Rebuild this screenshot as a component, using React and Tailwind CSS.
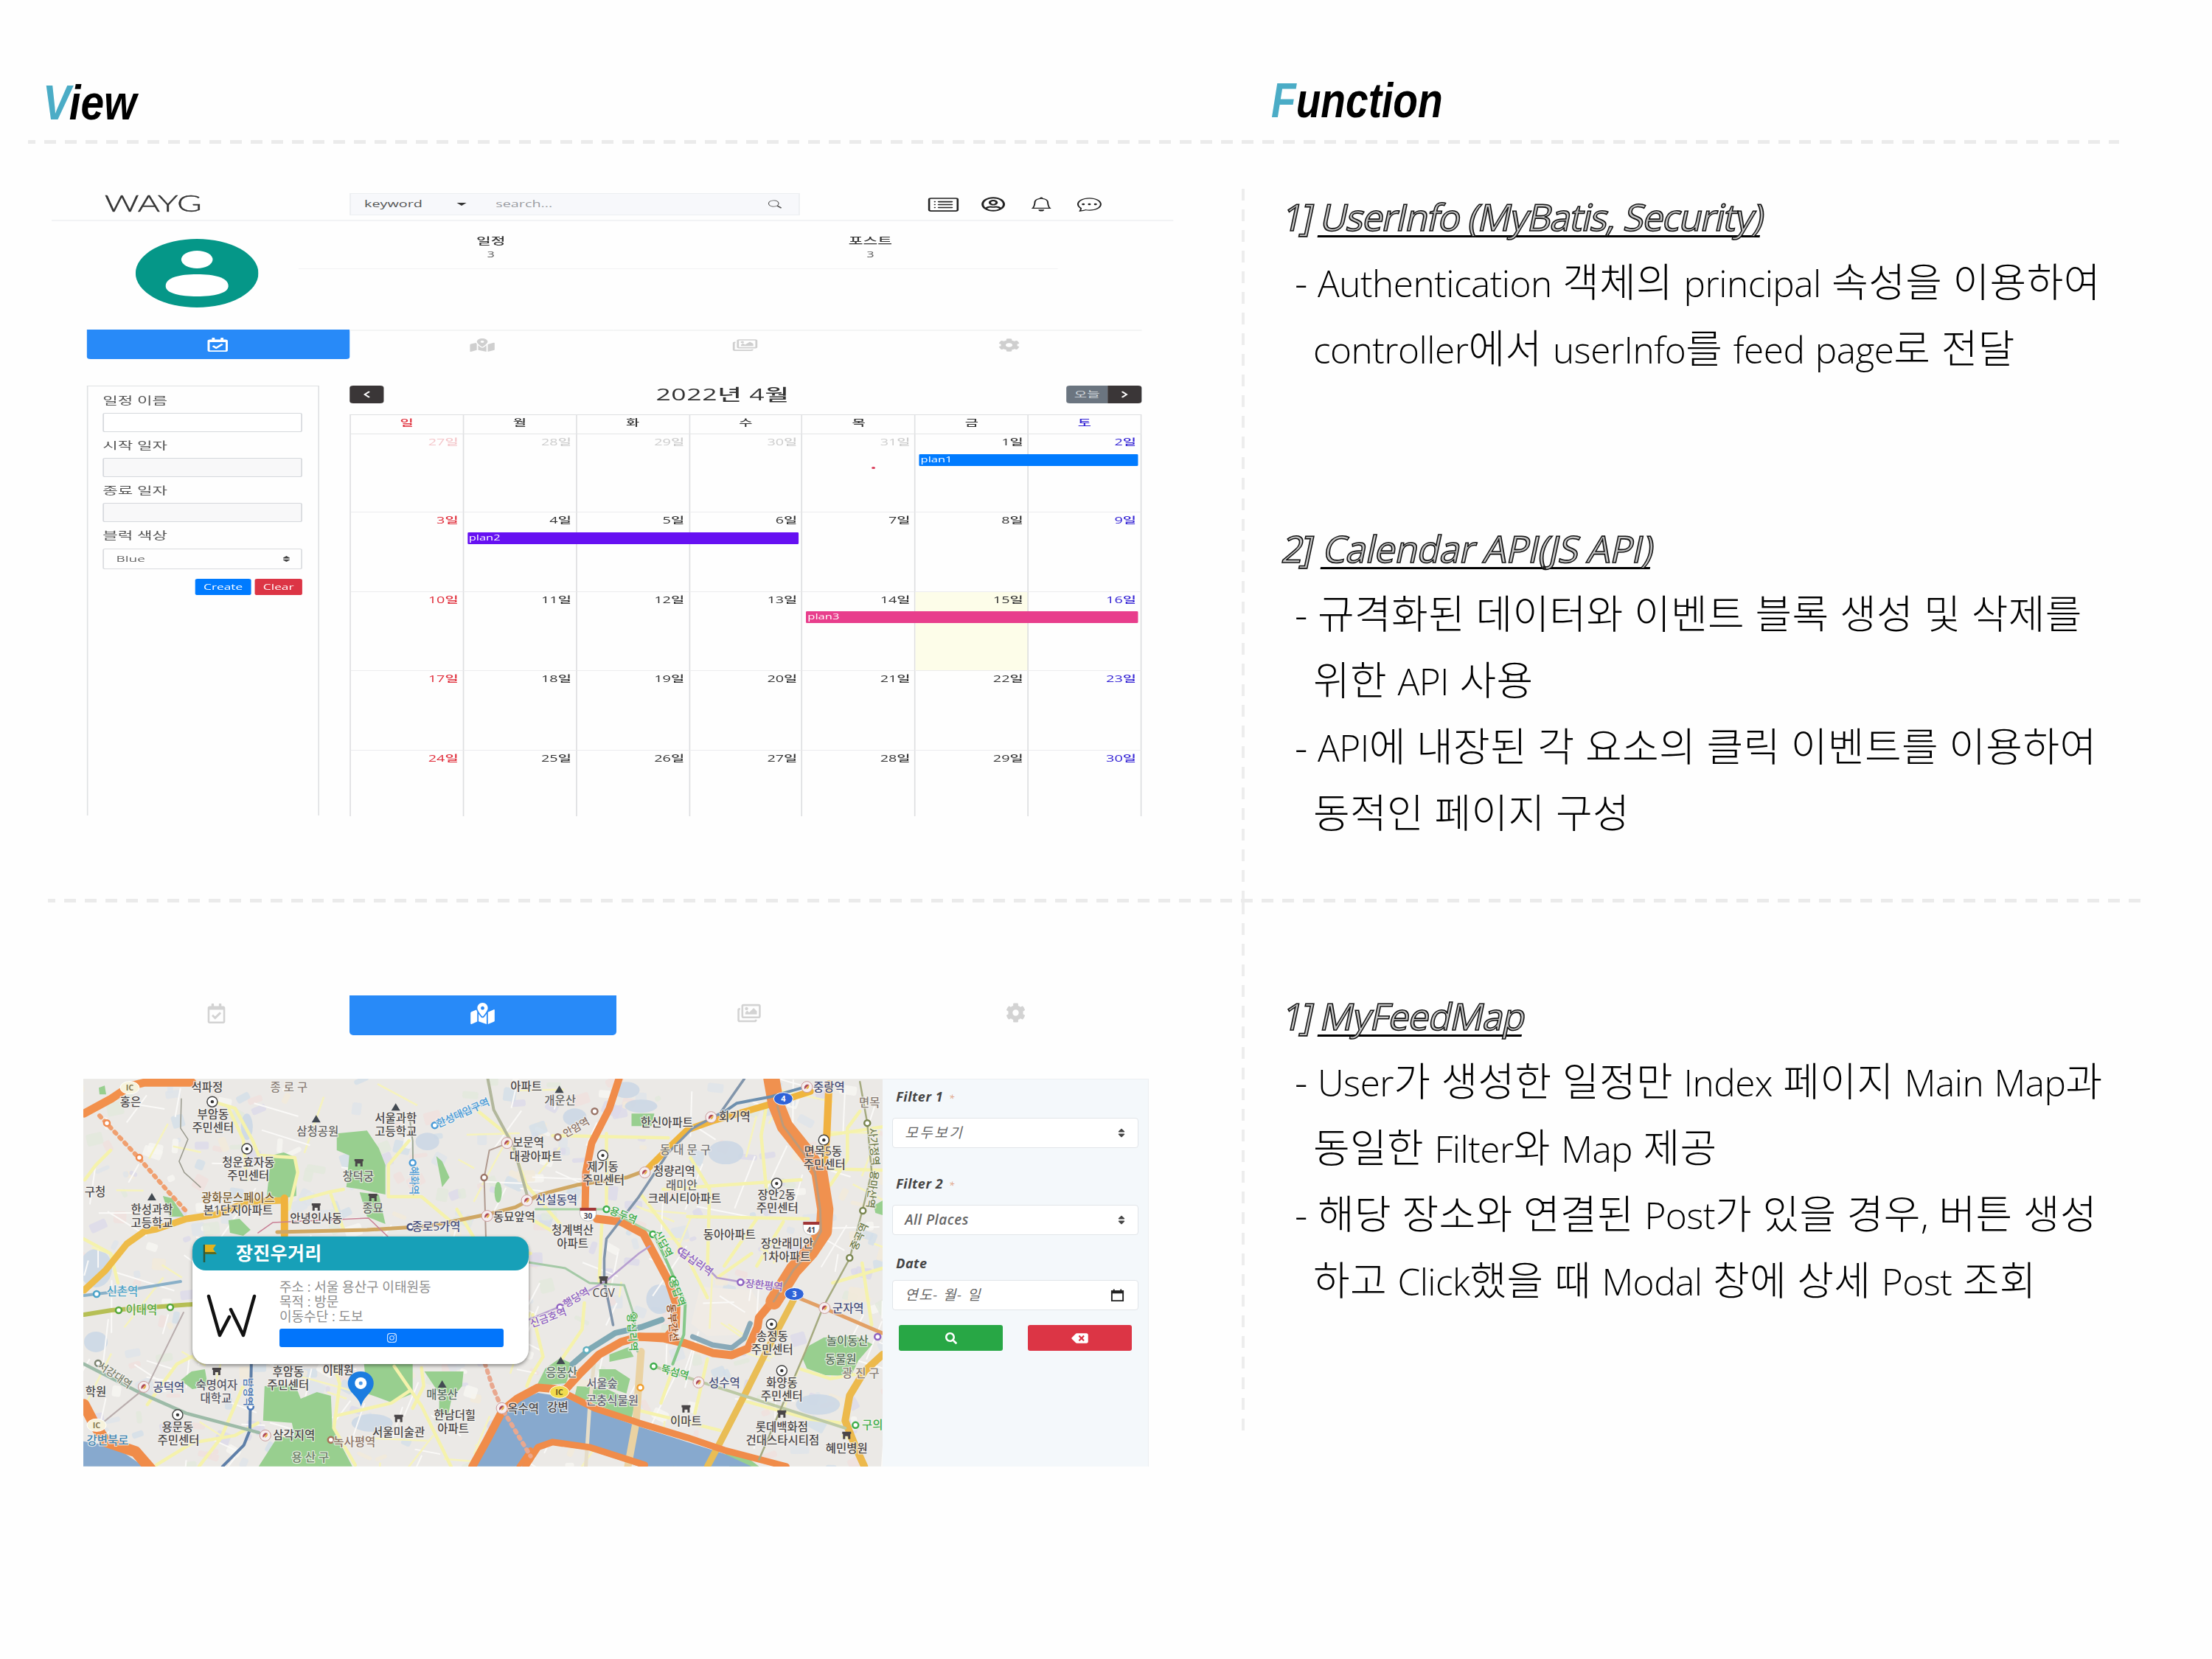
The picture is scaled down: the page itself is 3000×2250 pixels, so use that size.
import React from "react";
import { BsCardList, BsBell, BsChatDots, BsSearch } from "react-icons/bs";
import {
  FaRegCalendarCheck, FaMapMarkedAlt, FaRegImages, FaCog, FaSearch, FaBackspace,
  FaInstagram, FaChevronLeft, FaChevronRight, FaRegUserCircle, FaSort,
} from "react-icons/fa";

/* ---------- shared ---------- */

function HDash({ className }) {
  return (
    <div className={"h-[5px] shrink-0 bg-[repeating-linear-gradient(90deg,#ebebeb_0_10px,transparent_10px_22px,#ebebeb_22px_28px)] " + className} />
  );
}

function VDash({ className }) {
  return (
    <div className={"w-[4px] shrink-0 bg-[repeating-linear-gradient(180deg,#ededed_0_16px,transparent_16px_28px)] " + className} />
  );
}

/* ---------- right column text ---------- */

function Mixed({ text }) {
  const parts = text.split(/([A-Za-z,]+)/).filter(Boolean);
  return parts.map((p, i) =>
    /[A-Za-z,]/.test(p) ? (
      <span key={i} className="text-[49.500px] tracking-[-0.5px]">{p}</span>
    ) : (
      <span key={i}>{p}</span>
    )
  );
}

function Line({ text, dash }) {
  return (
    <p className="flex h-[90px] whitespace-pre text-[54px] leading-[91px] font-light tracking-[0.350px] text-black">
      <span className={dash ? "w-[31px]" : "w-[25px]"}>{dash ? "-" : ""}</span>
      <span><Mixed text={text} /></span>
    </p>
  );
}

function Topic({ no, title, spacing, lines }) {
  return (
    <article className="pl-[68px]">
      <h2 className="-ml-[20px] flex h-[90px] origin-[0_68px] -skew-x-12 whitespace-pre text-[50px] leading-[95px] font-normal text-[#c4c4c4] [-webkit-text-stroke:1.6px_#111]">
        <span className={"tracking-[-3px] " + (no === "2" ? "w-[56px]" : "w-[52px]")}>{no}]</span>
        <span className={"underline decoration-black decoration-[3px] underline-offset-[6px] [text-decoration-skip-ink:none] " + spacing}>{title}</span>
      </h2>
      {lines.map(([dash, t]) => <Line key={t} dash={dash} text={t} />)}
    </article>
  );
}

/* ---------- feed page with calendar ---------- */

function Avatar() {
  return (
    <svg viewBox="0 0 100 93" className="h-[93px] w-[101px]" preserveAspectRatio="none">
      <ellipse cx="50" cy="46.5" rx="50" ry="46.5" fill="#059788" />
      <ellipse cx="50" cy="28" rx="12.8" ry="12" fill="#fff" />
      <path d="M24.500 64C24.500 52 36 48 50 48s25.500 4 25.500 16c0 10-12 14-25.500 14S24.500 74 24.500 64z" fill="#fff" />
    </svg>
  );
}

function NavBar() {
  return (
    <div className="flex h-[44px] items-center border-b-2 border-[#f2f3f5]">
      <svg className="ml-[43px] h-[42px] w-[82px] overflow-visible" viewBox="0 0 82 42">
        <text x="0.500" y="31.500" textLength="80" lengthAdjust="spacingAndGlyphs" fontFamily="Lato" fontWeight="300" fontSize="31" fill="#333" stroke="#333" strokeWidth="0.400">WAYG</text>
      </svg>
      <div className="ml-[120px] flex h-[30px] w-[370px] items-center border border-[#eceef1] bg-[#f7f8fb] text-[12px] text-[#555]">
        <span className="ml-[11px] w-[76px]">keyword</span>
        <span className="h-0 w-0 border-x-[4px] border-t-[4px] border-x-transparent border-t-[#333]" />
        <span className="ml-[24px] flex-1 text-[#9a9da2]">search...</span>
        <BsSearch className="mr-[14px] h-[12px] w-[11px] text-[#555]" />
      </div>
      <div className="ml-[104px] flex items-center text-[#222]">
        <BsCardList className="h-[25px] w-[28px]" />
        <FaRegUserCircle className="ml-[16px] h-[20px] w-[22px]" />
        <BsBell className="ml-[19px] h-[20px] w-[19px]" />
        <BsChatDots className="ml-[19px] h-[20px] w-[22px]" />
      </div>
    </div>
  );
}

function Stat({ label }) {
  return (
    <div className="flex flex-1 flex-col items-center pt-[17px] pl-[4px] text-[#333]">
      <span className="h-[19px] text-[13px] leading-[19px] font-medium">{label}</span>
      <span className="text-[11px] leading-[18px] text-[#555]">3</span>
    </div>
  );
}

function FeedTabs() {
  return (
    <div className="ml-[28.500px] flex h-[40px] w-[867px] text-[#cfcfcf]">
      <div className="flex flex-1 items-center justify-center rounded-b-[3px] bg-[#288af8] text-white">
        <FaRegCalendarCheck className="h-[19px] w-[19px]" />
      </div>
      {[FaMapMarkedAlt, FaRegImages, FaCog].map((Icon, i) => (
        <div key={i} className="flex flex-1 items-center justify-center border-t-2 border-[#f3f4f5]">
          <Icon className="h-[18px] w-[22px]" />
        </div>
      ))}
    </div>
  );
}

function FormField({ label, box }) {
  return (
    <div className="flex flex-col">
      <span className="h-[29px] text-[13.500px] leading-[25px] text-[#555]">{label}</span>
      <div className={"mb-[6px] h-[26px] rounded-[2px] border border-[#d5d8dc] " + box} />
    </div>
  );
}

function PlanForm() {
  return (
    <div className="h-[583px] w-[191px] border-x border-t border-[#dfe1e3] px-[12.500px] pt-[7px]">
      <FormField label="일정 이름" box="bg-white" />
      <FormField label="시작 일자" box="bg-[#f8f8f9]" />
      <FormField label="종료 일자" box="bg-[#f8f8f9]" />
      <span className="block h-[30px] text-[13.500px] leading-[24px] text-[#555]">블럭 색상</span>
      <div className="flex h-[28px] items-center justify-between rounded-[2px] border border-[#d9dbde] px-[10px] text-[11.5px] text-[#666]">
        <span>Blue</span>
        <FaSort className="-mr-[2px] h-[10px] w-[8px] text-[#444]" />
      </div>
      <div className="mt-[13px] flex justify-end gap-[3px] text-[10.500px] leading-[22px] font-medium text-white">
        <span className="h-[22px] w-[46px] rounded-[2px] bg-[#007bff] text-center">Create</span>
        <span className="h-[22px] w-[39px] rounded-[2px] bg-[#dc3545] text-center">Clear</span>
      </div>
    </div>
  );
}

const WEEKDAYS = ["일", "월", "화", "수", "목", "금", "토"];
const WEEKS = [
  [27, 28, 29, 30, 31, 1, 2],
  [3, 4, 5, 6, 7, 8, 9],
  [10, 11, 12, 13, 14, 15, 16],
  [17, 18, 19, 20, 21, 22, 23],
  [24, 25, 26, 27, 28, 29, 30],
];
const PLANS = {
  0: { label: "plan1", cls: "col-start-6 col-span-2 bg-[#007bff]" },
  1: { label: "plan2", cls: "col-start-2 col-span-3 bg-[#6610f2]" },
  2: { label: "plan3", cls: "col-start-5 col-span-3 bg-[#e83e8c]" },
};

function dayColor(col, faded) {
  if (col === 0) return faded ? "text-[#f4c6ca]" : "text-[#e02d3a]";
  if (col === 6) return "text-[#3322d4]";
  return faded ? "text-[#cccccc]" : "text-[#333]";
}

function Week({ days, index }) {
  const plan = PLANS[index];
  const height = index === 4 ? "h-[89px]" : index === 0 ? "h-[106px]" : "h-[107.5px]";
  return (
    <div className={"relative " + height}>
      <div className="grid h-full grid-cols-7">
        {days.map((d, c) => (
          <div
            key={c}
            className={
              "border-r border-[#dddee0] pr-[3.500px] text-right text-[12px] leading-[21px] font-medium " +
              (index < 4 ? "border-b border-b-[#ececee] " : "") +
              (index === 2 && c === 5 ? "bg-[#fdfde9] " : "") +
              dayColor(c, index === 0 && d > 20)
            }
          >
            {d}일
          </div>
        ))}
      </div>
      {plan && (
        <div className="absolute inset-x-0 top-[26.500px] grid grid-cols-7">
          <div className={"mr-[3px] ml-[3px] h-[16px] rounded-[1px] pl-[1px] text-[10px] leading-[15px] text-white " + plan.cls}>
            {plan.label}
          </div>
        </div>
      )}
      {index === 0 && <span className="absolute top-[44px] left-[428px] h-[3px] w-[3px] rounded-full bg-[#d83a58]" />}
    </div>
  );
}

function Calendar() {
  return (
    <div className="w-[651px]">
      <div className="flex h-[39px] items-start justify-between">
        <span className="flex h-[24px] w-[28px] items-center justify-center rounded-[3px] bg-[#3a3637] text-white">
          <FaChevronLeft className="h-[10px] w-[8px]" />
        </span>
        <span className="-ml-[4px] text-[21.500px] leading-[24px] font-medium tracking-[0.400px] text-[#333]">2022년 4월</span>
        <span className="flex h-[24px] overflow-hidden rounded-[3px] text-white">
          <span className="w-[34px] bg-[#6b7580] text-center text-[11.500px] leading-[23px] text-[#d5dadf]">오늘</span>
          <span className="flex w-[28px] items-center justify-center bg-[#3a3637]">
            <FaChevronRight className="h-[10px] w-[8px]" />
          </span>
        </span>
      </div>
      <div className="border-t border-l border-[#dedfe1]">
        <div className="grid h-[26px] grid-cols-7 border-b border-[#e4e5e7] text-center text-[12px] leading-[21px] font-medium">
          {WEEKDAYS.map((w, c) => (
            <span key={w} className={"border-r border-[#e0e1e3] " + dayColor(c, false)}>{w}</span>
          ))}
        </div>
        {WEEKS.map((d, i) => <Week key={i} days={d} index={i} />)}
      </div>
    </div>
  );
}

function FeedPage() {
  return (
    <div className="ml-[70px] w-[922px] origin-top-left scale-x-[1.65]">
      <NavBar />
      <div className="flex h-[147px]">
        <div className="w-[203px] pt-[24px] pl-[69px]"><Avatar /></div>
        <div className="flex h-[65px] w-[624px] border-b border-[#f2f2f3]">
          <Stat label="일정" />
          <Stat label="포스트" />
        </div>
      </div>
      <FeedTabs />
      <div className="mt-[36px] ml-[28.500px] flex gap-[25.500px]">
        <PlanForm />
        <Calendar />
      </div>
    </div>
  );
}

/* ---------- map page ---------- */

const rnd = (() => {
  let s = 11;
  return () => {
    s = (s * 16807) % 2147483647;
    return s / 2147483647;
  };
})();

const BLOCK_COLORS = ["#dfe3ea", "#d3dfe8", "#f0e0dd", "#e2e8dc", "#dcd9ea", "#f3ead9", "#f7f6f2"];
const BLOCKS = Array.from({ length: 420 }, () => ({
  x: 105 + rnd() * 1095, y: 1458 + rnd() * 530, w: 6 + rnd() * 20, h: 5 + rnd() * 15,
  r: rnd() * 60 - 30, f: BLOCK_COLORS[Math.floor(rnd() * 7)],
}));
const LANES = Array.from({ length: 200 }, () => {
  const x = 105 + rnd() * 1095, y = 1458 + rnd() * 530;
  const a = (rnd() < 0.5 ? 0.3 : 1.9) + (rnd() - 0.5) * 0.7, l = 20 + rnd() * 70;
  return { x1: x, y1: y, x2: x + Math.cos(a) * l, y2: y + Math.sin(a) * l, y: rnd() < 0.35 };
});

const PARKS = [
  "368,1567 385,1563 402,1570 402,1622 385,1625 362,1622",
  "457,1537 498,1533 514,1557 523,1580 523,1620 490,1613 470,1610 474,1567 457,1560",
  "488,1617 514,1620 523,1660 498,1650",
  "359,1880 400,1877 408,1897 430,1888 449,1893 451,1937 478,1989 351,1989 376,1950 400,1948 396,1930 357,1927",
  "494,1850 560,1850 560,1890 531,1902 498,1890", "576,1860 629,1860 627,1880 613,1896 608,1920 596,1918 596,1890",
  "245,1872 260,1860 278,1857 282,1880 261,1884", "221,1622 233,1625 250,1650 230,1650",
  "310,1655 325,1653 340,1668 330,1676 312,1672", "592,1568 600,1575 610,1597 600,1610",
  "857,1510 888,1510 884,1527 857,1527",
  "1089,1842 1098,1825 1118,1814 1160,1812 1184,1823 1165,1845 1155,1866 1120,1865 1095,1856",
  "813,1857 835,1857 855,1870 850,1890 813,1877", "783,1880 820,1882 862,1902 857,1924 780,1893",
  "827,1837 853,1827 860,1840 827,1847", "728,1880 740,1856 760,1842 778,1850 768,1876",
  "983,1968 1010,1974 1030,1989 990,1989", "1186,1635 1198,1628 1198,1648 1188,1645", "134,1475 142,1472 144,1484 135,1484",
];
const WATER = [
  "661,1953 682,1916 702,1900 730,1889 767,1895 807,1914 867,1935 983,1972 1020,1989 867,1989 800,1967 750,1960 730,1966 712,1989 643,1989",
  "113,1955 143,1960 170,1972 195,1989 113,1989",
];
const MINOR = [
  "286,1493 319,1503 343,1547 351,1567 400,1570 404,1590 392,1640", "310,1503 330,1545 335,1600",
  "649,1507 690,1540 714,1607 760,1660", "555,1547 527,1580 527,1623 572,1623 610,1655", "466,1613 445,1617 408,1627",
  "449,1620 466,1667", "453,1850 461,1877 453,1937 482,1987", "535,1853 572,1907 612,1989", "457,1920 531,1903 555,1887",
  "212,1987 261,1957 319,1947 350,1930", "1040,1500 1033,1540 1040,1613", "960,1720 963,1613 937,1570", "900,1613 1087,1600",
  "933,1650 1097,1653", "750,1540 907,1543", "1167,1507 1150,1530 1150,1573 1127,1607", "817,1653 813,1740",
  "720,1653 750,1670", "823,1537 823,1633", "983,1717 1027,1653", "1027,1717 1063,1657", "723,1783 737,1840 720,1867 715,1880",
  "793,1767 790,1803 760,1847", "973,1733 1020,1700", "960,1843 943,1917", "913,1857 897,1903", "867,1913 977,1940",
  "1170,1713 1183,1797", "1087,1857 1127,1870 1167,1863", "1120,1540 1198,1528", "1110,1585 1198,1587", "1130,1740 1198,1720",
  "113,1680 150,1700 160,1740", "150,1560 130,1580 115,1600", "200,1905 240,1850 260,1840", "620,1640 650,1690 720,1700",
  "560,1910 575,1880 572,1855", "270,1989 300,1950 330,1880", "1010,1900 1100,1925 1140,1930", "870,1620 930,1700 960,1760",
];
const ROADS = [
  ["#eebb48", 9, "114,1750 143,1723 172,1687 196,1670 212,1667 253,1653 294,1647 335,1630 384,1628"],
  ["#efb23c", 10, "386,1625 386,1675"],
  ["#cfa763", 5, "376,1671 498,1668 580,1663 612,1657 661,1647 700,1637 733,1620 783,1607 850,1597 877,1587"],
  ["#efb53e", 9, "877,1587 907,1557 933,1532 967,1520 1047,1497 1100,1480"],
  ["#f0b140", 10, "1125,1470 1122,1540 1117,1590"],
  ["#e9bd55", 9, "1077,1763 1040,1833 1010,1893 977,1957 960,1989"],
  ["#ecb94c", 10, "1198,1837 1173,1860 1153,1893 1147,1927 1160,1960 1173,1989"],
  ["#e2a066", 5, "1083,1760 1127,1778 1197,1808"],
  ["#ead2a2", 10, "870,1833 863,1930 852,1989"],
  ["#e6ddc8", 5, "807,1840 800,1910 795,1989"],
  ["#7fa9b4", 8, "777,1850 800,1830 835,1808 870,1800 898,1790"],
  ["#89a9b8", 7, "940,1813 967,1824 993,1828 1010,1815 1018,1795"],
  ["#f2904c", 11, "114,1510 151,1490 176,1473 196,1468 261,1468"],
  ["#f08c4a", 10, "840,1463 827,1503 803,1550 795,1590 794,1640"],
  ["#f08c4a", 11, "810,1653 843,1657 873,1673 890,1705 907,1737 918,1770 917,1800 905,1813 867,1813 843,1820 813,1837 787,1863 767,1885 730,1882 702,1897 682,1913 661,1953 641,1989"],
  ["#f08c4a", 11, "867,1813 900,1815 930,1822 967,1835 993,1838 1015,1829 1028,1800 1030,1787 1050,1763"],
  ["#f0914f", 22, "1050,1765 1077,1722 1100,1697 1118,1670 1120,1640 1112,1590 1097,1567 1065,1527 1053,1497 1047,1463"],
  ["#bd9a7a", 3, "1050,1765 1077,1722 1100,1697 1114,1670 1113,1640 1106,1590 1093,1567 1063,1527 1055,1500"],
  ["#f08c4a", 9, "767,1890 807,1910 867,1930 933,1950 983,1967 1067,1989"],
  ["#f08c4a", 9, "713,1989 730,1963 750,1956 800,1963 875,1987"],
  ["#f08c4a", 15, "114,1905 127,1930 143,1955 184,1969 204,1992"],
  ["#f08c4a", 6, "704,1989 720,1966"],
  ["#8195ab", 3.5, "1010,1463 977,1510 940,1530 907,1563 867,1623 823,1680 820,1707 820,1737 832,1797"],
  ["#6d8fae", 4, "977,1512 1000,1496 1047,1487 1093,1474"],
  ["#5e7fa8", 4, "341,1850 339,1940 331,1960 302,1989"],
  ["#9dbba8", 4.5, "114,1850 192,1890 253,1917 351,1943"],
  ["#b9adad", 2, "249,1780 200,1880 139,1930"],
  ["#b6bf55", 6, "114,1783 151,1777 261,1769"],
  ["#8ab0c8", 4, "114,1757 172,1750 245,1738"],
  ["#a8d3a3", 3, "727,1640 823,1640 887,1673"],
  ["#86c88a", 4, "887,1673 903,1707 930,1767 928,1810 913,1850"],
  ["#a4c9a6", 3, "717,1712 767,1720 800,1740 847,1743 860,1783 865,1833"],
  ["#bcc9a5", 4, "887,1853 947,1873 1147,1937"],
  ["#b79fd0", 2.5, "717,1790 760,1772 800,1750 823,1737 867,1700 882,1690"],
  ["#b79fd0", 2.5, "925,1697 960,1720 973,1733 1060,1748"],
  ["#a5aa80", 2.5, "1167,1467 1177,1523 1183,1590 1170,1643 1153,1707 1117,1773 1093,1833 1030,1980"],
  ["#9a9a8e", 1.5, "246,1490 245,1530 255,1545 243,1575 250,1590 272,1610"],
  ["#c87f94", 1.5, "350,1672 370,1658 500,1652 540,1690"],
  ["#b09a8f", 2, "660,1700 657,1597 664,1560 690,1550"],
  ["#b2b79c", 4, "662,1463 670,1505 697,1555 715,1620"],
  ["#9ba695", 2, "555,1510 560,1547 561,1620"],
];
const DOTTED = [
  ["#f0a070", "135,1513 188,1570 229,1617 253,1643"],
  ["#e9a88f", "655,1840 668,1880 681,1910 720,1975"],
  ["#7db8e6", "590,1526 661,1494"],
];

/* [x, y, text, colour, rotation] */
const LABELS = [
  [392, 1480, "종 로 구", "#8a7f78"], [281, 1480, "석파정"], [177, 1500, "홍은"], [289, 1517, "부암동"], [289, 1535, "주민센터"],
  [431, 1540, "삼청공원", "#666"], [537, 1522, "서울과학"], [537, 1540, "고등학교"], [628, 1514, "한성대입구역", "#4a9bd8", -24],
  [714, 1479, "아파트"], [337, 1582, "청운효자동"], [337, 1600, "주민센터"], [486, 1601, "창덕궁", "#666"], [506, 1644, "종묘", "#666"],
  [323, 1630, "광화문스페이스", "#7a5c30"], [323, 1647, "본1단지아파트"], [429, 1658, "안녕인사동"], [206, 1646, "한성과학"],
  [206, 1664, "고등학교"], [129, 1622, "구청"], [592, 1669, "종로5가역", "#47507e"], [698, 1656, "동묘앞역"], [717, 1555, "보문역"],
  [727, 1574, "대광아파트"], [562, 1606, "혜화역", "#4a9bd8", 90], [760, 1498, "개운산", "#666"], [782, 1534, "안암역", "#8d7468", -30],
  [818, 1588, "제기동"], [819, 1606, "주민센터"], [905, 1528, "한신아파트"], [997, 1520, "회기역"], [930, 1565, "동 대 문 구", "#777"],
  [915, 1594, "청량리역"], [925, 1613, "래미안", "#666"], [929, 1631, "크레시티아파트"], [755, 1633, "신설동역", "#47507e"],
  [777, 1674, "청계벽산"], [777, 1692, "아파트"], [846, 1653, "용두역", "#3fae4c", 22], [900, 1692, "신답역", "#3fae4c", 62],
  [945, 1717, "답십리역", "#8f63c2", 35], [1125, 1480, "중랑역", "#47507e"], [1117, 1567, "면목5동"], [1119, 1585, "주민센터"],
  [1054, 1626, "장안2동"], [1055, 1644, "주민센터"], [990, 1680, "동아아파트"], [1068, 1692, "장안래미안"], [1067, 1710, "1차아파트"],
  [1180, 1501, "면목", "#8a7f78"], [1186, 1560, "사가정역", "#6f7d4c", 85], [1184, 1618, "용마산역", "#6f7d4c", 97],
  [1166, 1682, "중곡역", "#6f7d4c", -65], [819, 1759, "CGV"], [782, 1765, "행당역", "#8f63c2", -30], [744, 1792, "신금호역", "#8f63c2", -20],
  [919, 1758, "용답역", "#3fae4c", 70], [858, 1812, "왕십리역", "#3fae4c", 86], [1037, 1748, "장한평역", "#8f63c2", 6],
  [1151, 1780, "군자역", "#47507e"], [1048, 1818, "송정동"], [1048, 1836, "주민센터"], [1150, 1824, "놀이동산", "#56705a"],
  [1141, 1849, "동물원", "#56705a"], [1168, 1868, "광 진 구", "#8a7f78"], [1061, 1881, "화양동"], [1061, 1899, "주민센터"],
  [762, 1867, "응봉산", "#5a6e66"], [817, 1882, "서울숲", "#667"], [831, 1905, "곤충식물원", "#667"], [916, 1866, "뚝섬역", "#3fae4c", 16],
  [983, 1881, "성수역", "#47507e"], [931, 1933, "이마트"], [1061, 1941, "롯데백화점"], [1062, 1959, "건대스타시티점"],
  [1184, 1938, "구의", "#3fae4c"], [1149, 1970, "혜민병원"], [710, 1916, "옥수역"], [757, 1914, "강변"], [391, 1866, "후암동"],
  [391, 1884, "주민센터"], [229, 1887, "공덕역", "#47507e"], [156, 1870, "서강대역", "#7c8370", 34], [294, 1884, "숙명여자", "#556"],
  [293, 1902, "대학교", "#556"], [241, 1941, "용문동"], [242, 1959, "주민센터"], [399, 1952, "삼각지역"], [481, 1961, "녹사평역", "#8d7468"],
  [421, 1982, "용 산 구", "#6c7f68"], [541, 1948, "서울미술관"], [617, 1925, "한남더힐"], [615, 1943, "아파트"], [600, 1897, "매봉산", "#5a6e66"],
  [337, 1893, "남영역", "#4a78b8", 90], [192, 1782, "이대역", "#57a83c"], [166, 1757, "신촌역", "#4aa2c8"],
  [146, 1959, "강변북로", "#3f86b5"], [130, 1893, "학원"], [459, 1864, "이태원"], [913, 1799, "동부간선", "#8f4a1c", 84],
];
const OFFICES = [
  [288, 1494], [335, 1558], [818, 1567], [1118, 1546], [1054, 1605], [1047, 1796], [1061, 1859], [241, 1919],
];
const STATIONS = [
  [145, 1523, "#f08b50"], [189, 1570, "#f08b50"], [590, 1526, "#4a9bd8"], [560, 1577, "#4a9bd8"], [657, 1597, "#9a7568"],
  [557, 1664, "#47507e"], [807, 1507, "#9a7568"], [757, 1542, "#9a7568"], [823, 1640, "#3fae4c"], [886, 1674, "#3fae4c"],
  [925, 1697, "#8f63c2"], [1177, 1523, "#7a8650"], [1171, 1642, "#7a8650"], [1153, 1706, "#7a8650"], [760, 1773, "#8f63c2"],
  [913, 1735, "#3fae4c"], [860, 1785, "#3fae4c"], [1005, 1739, "#8f63c2"], [887, 1853, "#3fae4c"], [869, 1882, "#f0a030"],
  [1161, 1933, "#3fae4c"], [1191, 1813, "#8f63c2"], [133, 1849, "#7c8370"], [449, 1953, "#a8745a"], [340, 1908, "#4a78b8"],
  [161, 1777, "#57a83c"], [231, 1773, "#57a83c"], [131, 1755, "#4aa2c8"], [796, 1831, "#5fb0bf"],
];
const TRANSFERS = [
  [661, 1649], [688, 1550], [965, 1515], [875, 1590], [715, 1628], [1095, 1474], [1119, 1774], [948, 1875], [195, 1881],
  [360, 1947], [681, 1910],
];
const POIS = [
  [487, 1577], [506, 1624], [429, 1637], [819, 1736], [931, 1911], [1061, 1918], [294, 1860], [541, 1924], [1149, 1947],
];
const PEAKS = [[429, 1518], [537, 1502], [206, 1624], [759, 1478], [761, 1846], [600, 1878]];

function Badge({ x, y, text, fill, color }) {
  return (
    <g>
      <ellipse cx={x} cy={y} rx="13" ry="8.500" fill={fill} stroke="#fff" strokeWidth="1" />
      <text x={x} y={y + 4} textAnchor="middle" fontSize="11" fontWeight="700" fill={color}>{text}</text>
    </g>
  );
}

function Shield({ x, y, text }) {
  return (
    <g>
      <path d={`M${x - 11} ${y - 8}h22v8q-2 9-11 9t-11-9z`} fill="#fff" stroke="#aaa" strokeWidth="0.700" />
      <path d={`M${x - 11} ${y - 9}h22v4h-22z`} fill="#a03434" />
      <text x={x} y={y + 6} textAnchor="middle" fontSize="10" fontWeight="700" fill="#445">{text}</text>
    </g>
  );
}

function CityMap() {
  return (
    <svg viewBox="113 1463 1085 526" className="block h-[526px] w-[1085px]" fontFamily="'Open Sans', 'Noto Sans CJK KR', sans-serif">
      <rect x="113" y="1463" width="1085" height="526" fill="#ebe9e6" />
      {BLOCKS.map((b, i) => (
        <rect key={i} x={b.x} y={b.y} width={b.w} height={b.h} rx="3" fill={b.f} opacity="0.800" transform={`rotate(${b.r} ${b.x} ${b.y})`} />
      ))}
      <g fill="#ccd8e5" opacity="0.900">
        <ellipse cx="850" cy="1478" rx="18" ry="11" /><ellipse cx="780" cy="1515" rx="16" ry="12" />
        <ellipse cx="870" cy="1500" rx="22" ry="9" /><ellipse cx="985" cy="1563" rx="24" ry="16" />
        <ellipse cx="130" cy="1720" rx="22" ry="26" /><ellipse cx="1110" cy="1905" rx="30" ry="14" />
        <ellipse cx="130" cy="1820" rx="16" ry="14" /><ellipse cx="335" cy="1528" rx="8" ry="18" />
        <ellipse cx="580" cy="1548" rx="16" ry="12" /><ellipse cx="895" cy="1762" rx="18" ry="20" />
        <ellipse cx="505" cy="1930" rx="28" ry="12" />
      </g>
      <path d="M950 1745 L1020 1750 L1035 1775 L1012 1810 L960 1812 L938 1795z" fill="#f0ebe5" />
      {LANES.map((l, i) => (
        <line key={i} x1={l.x1} y1={l.y1} x2={l.x2} y2={l.y2} stroke={l.y ? "#f6f3bd" : "#faf9f7"} strokeWidth={l.y ? 2.5 : 2} />
      ))}
      {PARKS.map((p) => <polygon key={p} points={p} fill="#98cf8f" />)}
      <ellipse cx="676" cy="1617" rx="5" ry="14" fill="#98cf8f" />
      {WATER.map((p) => <polygon key={p} points={p} fill="#87a9ce" />)}
      <g fill="none" strokeLinejoin="round" strokeLinecap="round">
        {MINOR.map((p) => <polyline key={p} points={p} stroke="#f5f2ac" strokeWidth="4.500" />)}
        {ROADS.map(([c, w, p]) => <polyline key={p} points={p} stroke={c} strokeWidth={w} />)}
        {DOTTED.map(([c, p]) => <polyline key={p} points={p} stroke={c} strokeWidth="6" strokeDasharray="3 7" />)}
      </g>
      {STATIONS.map(([x, y, c]) => <circle key={x + "-" + y} cx={x} cy={y} r="4" fill="#fff" stroke={c} strokeWidth="2.500" />)}
      {TRANSFERS.map(([x, y]) => (
        <g key={x + "-" + y}>
          <circle cx={x} cy={y} r="7.500" fill="#f5eef0" stroke="#c99a9a" strokeWidth="1" />
          <path d={`M${x - 3} ${y + 3}a4.500 4.500 0 0 1 6-6l-3 3z`} fill="#b04a58" />
          <path d={`M${x + 3} ${y - 3}a4.500 4.500 0 0 1-4 6l1-3z`} fill="#e8b34c" />
        </g>
      ))}
      {OFFICES.map(([x, y]) => (
        <g key={x + "-" + y}>
          <circle cx={x} cy={y} r="7" fill="#fff" stroke="#444" strokeWidth="1.500" />
          <circle cx={x} cy={y} r="2.200" fill="#333" />
        </g>
      ))}
      {POIS.map(([x, y]) => (
        <path key={x + "-" + y} d={`M${x - 6} ${y - 5}h12v3h-1v7h-3v-4h-4v4h-3v-7h-1z`} fill="#4a4648" />
      ))}
      {PEAKS.map(([x, y]) => <path key={x + "-" + y} d={`M${x} ${y - 6}l6 10h-12z`} fill="#434a52" />)}
      <g fontWeight="500" textAnchor="middle" stroke="#f4f2ee" strokeWidth="2.500" paintOrder="stroke" strokeLinejoin="round" strokeOpacity="0.800">
        {LABELS.map(([x, y, t, c, r]) => (
          <text key={x + "-" + y} x={x} y={y} fill={c || "#4b484a"} fontSize={r ? 14 : 15.5} transform={r ? `rotate(${r} ${x} ${y - 5})` : undefined}>{t}</text>
        ))}
      </g>
      <Badge x={176} y={1475} text="IC" fill="#f7f3dc" color="#8a7a50" />
      <Badge x={131} y={1933} text="IC" fill="#f7f3dc" color="#8a7a50" />
      <Badge x={759} y={1888} text="IC" fill="#f2dc4e" color="#6b5a20" />
      <Badge x={1063} y={1490} text="4" fill="#2f63d8" color="#fff" />
      <Badge x={1078} y={1755} text="3" fill="#2f63d8" color="#fff" />
      <Shield x={798} y={1647} text="30" />
      <Shield x={1101} y={1666} text="41" />
      <path d="M490 1908C487 1893 472 1889 472 1876a17.500 16 0 0 1 35 0C507 1889 493 1893 490 1908z" fill="#1b7ce0" />
      <circle cx="489.500" cy="1876" r="8" fill="#fff" />
      <circle cx="489.500" cy="1876" r="2.500" fill="#4f9be8" />
    </svg>
  );
}

function PlacePopup() {
  return (
    <div className="absolute top-[214px] left-[148px] h-[173px] w-[456px] rounded-[20px] bg-white shadow-[0_2px_5px_rgba(0,0,0,0.45)]">
      <div className="flex h-[46px] items-center rounded-[18px] bg-[#17a0b8]">
        <svg viewBox="0 0 22 26" className="ml-[13px] h-[26px] w-[22px]">
          <path d="M3 1v24" stroke="#2c5a3c" strokeWidth="2.500" />
          <path d="M4 1h15l-4 6 5 7H4z" fill="#e2b21c" />
          <path d="M4 11h14l2 3H4z" fill="#5b6a20" />
        </svg>
        <span className="mb-[3px] ml-[24px] text-[25px] leading-[38px] font-bold tracking-[0.300px] text-white">장진우거리</span>
      </div>
      <div className="flex">
        <svg viewBox="0 0 68 60" className="mt-[31px] ml-[19px] h-[60px] w-[68px]" fill="none" stroke="#111" strokeWidth="4.500" strokeLinecap="round" strokeLinejoin="round">
          <path d="M3 4L18 57L31 32M33 22L50 57L65 4" />
        </svg>
        <div className="ml-[31px] pt-[12px] text-[18px] leading-[20px] text-[#8e8e8e]">
          <p>주소 : 서울 용산구 이태원동</p>
          <p>목적 : 방문</p>
          <p>이동수단 : 도보</p>
          <div className="mt-[7px] flex h-[25px] w-[304px] items-center justify-center rounded-[3px] bg-[#0275fb] text-[#cfe3ff]">
            <FaInstagram className="h-[15px] w-[17px]" />
          </div>
        </div>
      </div>
    </div>
  );
}

function FilterLabel({ text, star, className }) {
  return (
    <p className={"h-[24px] pl-[5px] text-[18px] leading-[24px] font-bold tracking-[0.500px] text-[#444] italic " + className}>
      {text}
      {star && <span className="ml-[8px] text-[13px] leading-none font-normal text-[#e0a080]">*</span>}
    </p>
  );
}

function FilterPanel() {
  const box = "flex h-[41px] items-center justify-between rounded-[4px] border border-[#e1e5e9] bg-white pr-[15px] pl-[16px] text-[19px] italic text-[#666]";
  return (
    <div className="h-[526px] w-[361px] border-t border-r border-[#eceff2] bg-[#f4f8fb] px-[13px]">
      <FilterLabel className="mt-[11px]" text="Filter 1" star />
      <div className={box + " mt-[17px]"}>
        <span className="tracking-[2.500px]">모두보기</span><FaSort className="h-[15px] w-[14px] text-[#444]" />
      </div>
      <FilterLabel className="mt-[36px]" text="Filter 2" star />
      <div className={box + " mt-[17px] font-semibold"}>
        <span className="tracking-[0.500px]">All Places</span><FaSort className="h-[15px] w-[14px] text-[#444]" />
      </div>
      <FilterLabel className="mt-[26px]" text="Date" />
      <div className={box + " mt-[11px]"}>
        <span className="tracking-[1.500px]">연도- 월- 일</span>
        <svg viewBox="0 0 20 18" className="mr-[3px] h-[18px] w-[19px]">
          <path d="M2 3h16v13.500H2z" fill="none" stroke="#222" strokeWidth="2" />
          <path d="M1 2h18v4H1zM4 0h2v3H4zM14 0h2v3h-2z" fill="#222" />
        </svg>
      </div>
      <div className="mt-[20px] ml-[9px] flex gap-[34px] text-white">
        <span className="flex h-[35px] w-[141px] items-center justify-center rounded-[3px] bg-[#28a745]"><FaSearch className="h-[16px] w-[18px]" /></span>
        <span className="flex h-[35px] w-[141px] items-center justify-center rounded-[3px] bg-[#dc3545]"><FaBackspace className="h-[18px] w-[23px]" /></span>
      </div>
    </div>
  );
}

function MapPage() {
  return (
    <div className="ml-[113px] w-[1445px]">
      <div className="flex h-[54px] text-[#d3d3d3]">
        <span className="flex flex-1 items-center justify-center"><FaRegCalendarCheck className="mb-[6px] h-[27px] w-[29px]" /></span>
        <span className="flex flex-1 items-center justify-center rounded-b-[5px] bg-[#288af8] text-white"><FaMapMarkedAlt className="mb-[5px] h-[29px] w-[37px]" /></span>
        <span className="flex flex-1 items-center justify-center"><FaRegImages className="mb-[6px] h-[28px] w-[34px]" /></span>
        <span className="flex flex-1 items-center justify-center"><FaCog className="mb-[7px] h-[27px] w-[29px]" /></span>
      </div>
      <div className="relative mt-[59px] flex">
        <CityMap />
        <PlacePopup />
        <FilterPanel />
      </div>
    </div>
  );
}

/* ---------- slide ---------- */

const T1 = [
  [true, "Authentication 객체의 principal 속성을 이용하여"],
  [false, "controller에서 userInfo를 feed page로 전달"],
];
const T2 = [
  [true, "규격화된 데이터와 이벤트 블록 생성 및 삭제를"],
  [false, "위한 API 사용"],
  [true, "API에 내장된 각 요소의 클릭 이벤트를 이용하여"],
  [false, "동적인 페이지 구성"],
];
const T3 = [
  [true, "User가 생성한 일정만 Index 페이지 Main Map과"],
  [false, "동일한 Filter와 Map 제공"],
  [true, "해당 장소와 연결된 Post가 있을 경우, 버튼 생성"],
  [false, "하고 Click했을 때 Modal 창에 상세 Post 조회"],
];

export default function App() {
  return (
    <main className="flex h-[2250px] w-[3000px] flex-col overflow-hidden bg-[#fefefe] [font-family:'Open_Sans','Noto_Sans_CJK_KR',sans-serif]">
      <header className="flex h-[190px] shrink-0 items-start pt-[105px] pl-[58px] text-[66px] leading-[68px] font-bold italic text-black [font-family:'Liberation_Sans',sans-serif]">
        <h1 className="w-[1666px]"><span className="inline-block origin-left scale-x-[0.86]"><span className="text-[#4bacc6]">V</span>iew</span></h1>
        <h1 className="-mt-[3px]"><span className="inline-block origin-left scale-x-[0.835]"><span className="text-[#4bacc6]">F</span>unction</span></h1>
      </header>
      <HDash className="ml-[38px] w-[2836px]" />
      <section className="flex h-[1024px] shrink-0">
        <div className="w-[1684px] pt-[61px]"><FeedPage /></div>
        <VDash className="mt-[61px]" />
        <div className="pt-[52px]">
          <Topic no="1" title="UserInfo (MyBatis, Security)" spacing="tracking-[-1.400px]" lines={T1} />
          <div className="h-[180px]" />
          <Topic no="2" title="Calendar API(JS API)" spacing="tracking-[-0.500px]" lines={T2} />
        </div>
      </section>
      <HDash className="ml-[65px] w-[2838px]" />
      <section className="flex h-[1026px] shrink-0">
        <div className="w-[1684px] pt-[126px]"><MapPage /></div>
        <VDash className="h-[718px]" />
        <div className="pt-[107px]"><Topic no="1" title="MyFeedMap" spacing="tracking-[-1px]" lines={T3} /></div>
      </section>
    </main>
  );
}
